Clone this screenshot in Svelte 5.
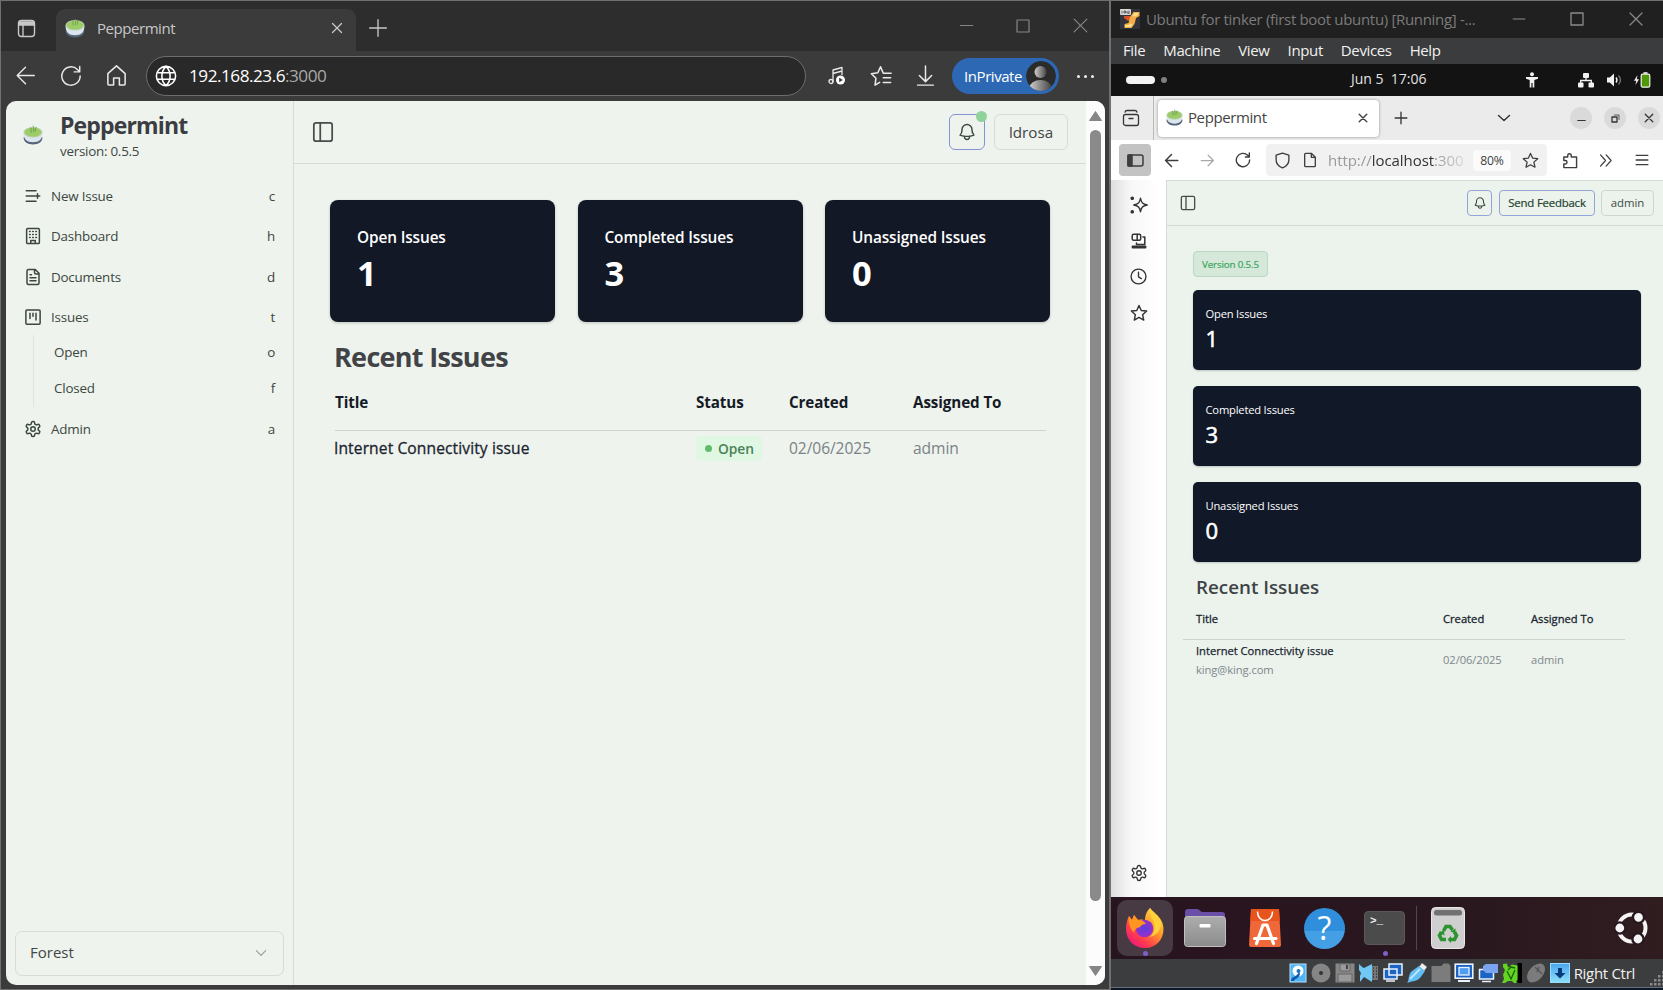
<script>
  const nav = [
    { label: 'New Issue', key: 'c', icon: 'list' },
    { label: 'Dashboard', key: 'h', icon: 'building' },
    { label: 'Documents', key: 'd', icon: 'file' },
    { label: 'Issues', key: 't', icon: 'kanban' },
    { label: 'Open', key: 'o', sub: true },
    { label: 'Closed', key: 'f', sub: true },
    { label: 'Admin', key: 'a', icon: 'gear' }
  ];
  const stats = [
    { label: 'Open Issues', value: 1 },
    { label: 'Completed Issues', value: 3 },
    { label: 'Unassigned Issues', value: 0 }
  ];
  const menus = ['File', 'Machine', 'View', 'Input', 'Devices', 'Help'];
  const paths = {
    list: 'M16 5H3M16 12H3M16 19H3M18 9v6M21 12h-7',
    building: 'M5 2h14a1.5 1.5 0 0 1 1.500 1.500v17a1.500 1.500 0 0 1-1.500 1.500H5a1.500 1.500 0 0 1-1.500-1.500v-17A1.500 1.500 0 0 1 5 2zM9 22v-4h6v4M7.500 6h.8M11.600 6h.8M15.700 6h.8M7.500 10h.8M11.600 10h.8M15.700 10h.8M7.500 14h.8M11.600 14h.8M15.700 14h.8',
    file: 'M15 2H6a2 2 0 0 0-2 2v16a2 2 0 0 0 2 2h12a2 2 0 0 0 2-2V7zM14 2v4a2 2 0 0 0 2 2h4M10 9H8M16 13H8M16 17H8',
    kanban: 'M4 2.500h16A1.500 1.500 0 0 1 21.500 4v16a1.500 1.500 0 0 1-1.500 1.500H4A1.500 1.500 0 0 1 2.500 20V4A1.500 1.500 0 0 1 4 2.500zM8 7v7M12 7v4M16 7v9',
    gear: 'M12.220 2h-.44a2 2 0 0 0-2 2v.18a2 2 0 0 1-1 1.730l-.43.25a2 2 0 0 1-2 0l-.15-.08a2 2 0 0 0-2.730.73l-.22.38a2 2 0 0 0 .73 2.730l.15.1a2 2 0 0 1 1 1.720v.51a2 2 0 0 1-1 1.740l-.15.09a2 2 0 0 0-.73 2.730l.22.38a2 2 0 0 0 2.730.73l.15-.08a2 2 0 0 1 2 0l.43.25a2 2 0 0 1 1 1.730V20a2 2 0 0 0 2 2h.44a2 2 0 0 0 2-2v-.18a2 2 0 0 1 1-1.730l.43-.25a2 2 0 0 1 2 0l.15.08a2 2 0 0 0 2.730-.73l.22-.39a2 2 0 0 0-.73-2.730l-.15-.08a2 2 0 0 1-1-1.740v-.5a2 2 0 0 1 1-1.740l.15-.09a2 2 0 0 0 .73-2.730l-.22-.38a2 2 0 0 0-2.730-.73l-.15.08a2 2 0 0 1-2 0l-.43-.25a2 2 0 0 1-1-1.730V4a2 2 0 0 0-2-2zM15 12a3 3 0 1 1-6 0 3 3 0 0 1 6 0z',
    panel: 'M4.500 2h15A2.500 2.500 0 0 1 22 4.500v15a2.500 2.500 0 0 1-2.500 2.500h-15A2.500 2.500 0 0 1 2 19.500v-15A2.500 2.500 0 0 1 4.500 2zM9 2v20',
    bell: 'M14.860 17.080a23.800 23.800 0 0 0 5.450-1.310A9 9 0 0 1 18 9.750V9A6 6 0 0 0 6 9v.75a9 9 0 0 1-2.310 6.020c1.730.64 3.560 1.090 5.450 1.310m5.720 0a24.300 24.300 0 0 1-5.720 0m5.720 0a3 3 0 1 1-5.720 0',
    close: 'M3 3l18 18M21 3L3 21',
    plus: 'M12 2v20M2 12h20',
    minus: 'M2 12h20',
    square: 'M3 3h18v18H3z',
    back: 'M22 12H2.500M12 2.500L2.500 12l9.500 9.500',
    forward: 'M2 12h19.500M13 3.500l8.500 8.500-8.500 8.500',
    reload: 'M22 12a10 10 0 1 1-3-7.100L21.500 7.300M21.500 1.500v6h-6',
    home: 'M3 10l9-8 9 8v10.500a1.500 1.500 0 0 1-1.500 1.500H15v-7.500h-6V22H4.500A1.500 1.500 0 0 1 3 20.500z',
    globe: 'M22.500 12a10.500 10.500 0 1 1-21 0 10.500 10.500 0 0 1 21 0zM12 1.500c-6 5.500-6 15.500 0 21M12 1.500c6 5.500 6 15.500 0 21M2.600 8.500h18.800M2.600 15.500h18.800',
    starlist: 'M22 9h-7.500L11.500 2 8.500 8.500 1.500 9.500 6.500 14.500 5.500 22l5-3M14.500 14h8M14.500 19h8M17 9h6',
    download: 'M12 1v17M5 12l7 7 7-7M3 23h18',
    star: 'M12 2l3 6.600 7.200.8-5.400 4.900 1.500 7.200L12 17.900l-6.300 3.600 1.500-7.200L1.800 9.400 9 8.600z',
    chevron: 'M4 8l8 8 8-8',
    clock: 'M22.500 12a10.500 10.500 0 1 1-21 0 10.500 10.500 0 0 1 21 0zM12 6v6.500l4 2.500',
    shield: 'M12 1.500l9 3v6.500c0 5.500-4 9.500-9 11.500-5-2-9-6-9-11.500V4.500z',
    page: 'M14 2H5.500A1.500 1.500 0 0 0 4 3.500v17A1.500 1.500 0 0 0 5.500 22h13a1.500 1.500 0 0 0 1.500-1.500V8zM14 2v6h6',
    puzzle: 'M4 7h5.500V5a2.500 2.500 0 0 1 5 0v2H22v15H4v-5h2a2.500 2.500 0 0 0 0-5H4z',
    double: 'M4 3l8 9-8 9M13 3l8 9-8 9',
    menu: 'M2 4h20M2 12h20M2 20h20',
    sparkle: 'M14 3c1 6 3 8 9 9-6 1-8 3-9 9-1-6-3-8-9-9 6-1 8-3 9-9z'
  };
</script>

{#snippet ico(name, size, sw = 2)}
  <svg class="ico" width={size} height={size} viewBox="0 0 24 24" stroke-width={sw}><path d={paths[name]} /></svg>
{/snippet}

{#snippet tea(size)}
  <svg class="pic" width={size} height={size} viewBox="0 0 36 36">
    <path d="M1 22c0 9 8 13 17 13s17-4 17-13z" fill="#56647a" />
    <path d="M1 14c0 12 6 17 17 17s17-5 17-17z" fill="#dbe5ee" />
    <ellipse cx="18" cy="13" rx="17" ry="9.500" fill="#b9d3ac" />
    <ellipse cx="18" cy="12.800" rx="15" ry="8" fill="#9ccb68" />
    <path d="M14 5c2 3-1 4 1 8M18.500 2c2 4-1 6 1 10M23.500 4c-2 3 0 4-1 7" fill="none" stroke="#639747" stroke-width="1.500" stroke-linecap="round" />
  </svg>
{/snippet}

<div class="screen">
  <section class="edge">
    <div class="edge-tabs">
      <div class="tabs-menu">
        <svg class="ico" width="20" height="20" viewBox="0 0 20 20" stroke-width="1.400"><rect x="1.500" y="1.500" width="16" height="16" rx="3" /><path d="M2 3h15v3H2z" fill="currentColor" /><path d="M6 6v11" /></svg>
      </div>
      <div class="edge-tab">
        {@render tea(20)}
        <span class="tab-title">Peppermint</span>
        {@render ico('close', 12, 2.6)}
      </div>
      <div class="new-tab">{@render ico('plus', 20, 1.6)}</div>
      <div class="win-buttons">
        {@render ico('minus', 15, 1.6)}
        {@render ico('square', 16, 1.8)}
        {@render ico('close', 17, 1.7)}
      </div>
    </div>

    <div class="edge-bar">
      <div>{@render ico('back', 21, 1.6)}</div>
      <div>{@render ico('reload', 22, 1.6)}</div>
      <div>{@render ico('home', 23, 1.6)}</div>
      <div class="address">
        {@render ico('globe', 22, 1.7)}
        <span class="ip">192.168.23.6<span>:3000</span></span>
      </div>
      <div class="music">
        <svg class="ico" width="18" height="20" viewBox="0 0 18 20" stroke-width="1.300"><circle cx="3" cy="15.500" r="2" /><path d="M5 15.500V4l9-2.500v7M5 7.500l9-2.500" /><circle cx="12.500" cy="14" r="4.500" fill="#fff" stroke="none" /><path d="M11.200 11.800v4.400l3.600-2.200z" fill="#333" stroke="none" /></svg>
      </div>
      <div>{@render ico('starlist', 22, 1.7)}</div>
      <div class="down-btn">{@render ico('download', 21, 1.7)}</div>
      <div class="inprivate">
        <span>InPrivate</span>
        <svg class="pic" width="30" height="30" viewBox="0 0 30 30">
          <defs>
            <linearGradient id="av"><stop offset="0" stop-color="#d0ccca" /><stop offset="1" stop-color="#454545" /></linearGradient>
            <clipPath id="avc"><circle cx="15" cy="15" r="15" /></clipPath>
          </defs>
          <g clip-path="url(#avc)"><circle cx="15" cy="15" r="15" fill="#2b2b2b" /><circle cx="14.500" cy="11" r="6" fill="url(#av)" /><ellipse cx="14.500" cy="27" rx="11" ry="8" fill="url(#av)" /></g>
        </svg>
      </div>
      <div class="dots"><i></i><i></i><i></i></div>
    </div>

    <div class="edge-page">
      <aside class="side">
        <div class="brand">
          {@render tea(20)}
          <div class="brand-text">
            <h1>Peppermint</h1>
            <p>version: 0.5.5</p>
          </div>
        </div>
        <nav>
          {#each nav as item}
            <div class="nav-row" class:sub={item.sub}>
              {#if item.icon}{@render ico(item.icon, 18, 2)}{/if}
              <span class="nav-label">{item.label}</span>
              <span class="nav-key">{item.key}</span>
            </div>
          {/each}
        </nav>
        <div class="theme"><span>Forest</span>{@render ico('chevron', 14, 2)}</div>
      </aside>

      <div class="main">
        <header class="top">
          {@render ico('panel', 22, 1.9)}
          <div class="bell">{@render ico('bell', 20, 1.7)}<i class="ping"></i></div>
          <div class="user">ldrosa</div>
        </header>
        <div class="stats">
          {#each stats as s}
            <div class="stat"><span>{s.label}</span><b>{s.value}</b></div>
          {/each}
        </div>
        <h2>Recent Issues</h2>
        <div class="table">
          <div class="tr th"><span>Title</span><span>Status</span><span>Created</span><span>Assigned To</span></div>
          <div class="tr td">
            <span class="strong">Internet Connectivity issue</span>
            <span class="badge"><i></i>Open</span>
            <span>02/06/2025</span>
            <span>admin</span>
          </div>
        </div>
      </div>

      <div class="scroll">
        <svg class="pic" width="13" height="10" viewBox="0 0 13 10"><path d="M6.500 .5L12.500 9.500H.5z" fill="#868686" stroke="#868686" stroke-linejoin="round" /></svg>
        <div class="thumb"></div>
        <svg class="pic down" width="13" height="10" viewBox="0 0 13 10"><path d="M6.500 9.500L12.500 .5H.5z" fill="#868686" stroke="#868686" stroke-linejoin="round" /></svg>
      </div>
    </div>
  </section>

  <section class="vm">
    <div class="vm-title">
      <svg class="pic" width="20" height="20" viewBox="0 0 20 20"><rect width="20" height="20" fill="#32343c" /><path d="M4 7h6l1 3-3 2-4-3z" fill="#d9542b" /><path d="M19.500 3h-6l-3.500 5-1.500 6-4 1v4h7l3-4 1.500-6 3.500-2z" fill="#f7ad45" /><path d="M18.500 4h-4l-2 3 3 .5 2.500-1.500zM11 14l-3 2H5v2h5.500l2-2z" fill="#ffdf8c" /><rect x="0" y="0" width="11" height="6" rx="1" fill="#d8d8d8" /><path d="M2 2v2.500M4 2h1.500v2H4zM7 2v2h2M9 1.500V5" stroke="#444" stroke-width=".8" fill="none" /></svg>
      <span class="vm-name">Ubuntu for tinker (first boot ubuntu) [Running] -...</span>
      <div class="vm-win">
        {@render ico('minus', 14, 1.8)}
        {@render ico('square', 16, 2)}
        {@render ico('close', 16, 1.8)}
      </div>
    </div>
    <div class="vm-menu">{#each menus as m}<span>{m}</span>{/each}</div>

    <div class="gnome">
      <i class="ws"></i><i class="ws-dot"></i>
      <span class="clock">Jun 5&nbsp; 17:06</span>
      <svg class="pic access" width="12" height="16" viewBox="0 0 12 16" fill="#f2f2f2"><circle cx="6" cy="2.300" r="2" /><path d="M0 5h12v1.700L8.300 8v7.500H6.600V11H5.400v4.500H3.700V8L0 6.700z" /></svg>
      <svg class="pic net" width="16" height="15" viewBox="0 0 16 15" fill="#f2f2f2"><rect x="5" y="0" width="6" height="5" rx="1" /><rect x="0" y="9.500" width="5.500" height="5" rx="1" /><rect x="10.500" y="9.500" width="5.500" height="5" rx="1" /><path d="M2.700 10V7.500h10.600V10M8 5v2.500" fill="none" stroke="#f2f2f2" stroke-width="1.300" /></svg>
      <svg class="pic vol" width="15" height="14" viewBox="0 0 15 14" fill="#f2f2f2"><path d="M0 4.500h2.800L7 .5v13L2.800 9.500H0z" /><path d="M9 4.500q2 2.500 0 5" fill="none" stroke="#f2f2f2" stroke-width="1.400" /><path d="M11.500 2.500q4 4.500 0 9" fill="none" stroke="#777" stroke-width="1.300" /></svg>
      <svg class="pic" width="17" height="16" viewBox="0 0 17 16"><path d="M3.500 3L0 8.800h2.200L1.500 13 5 7.200H2.800z" fill="#f2f2f2" /><rect x="7.200" y="2.200" width="8.600" height="13" rx="1.500" fill="#4e9a06" stroke="#f2f2f2" stroke-width="1.200" /><path d="M9.500 1h4" stroke="#f2f2f2" stroke-width="1.600" /></svg>
    </div>

    <div class="ff-tabs">
      <div class="ff-view">
        <svg class="ico" width="18" height="18" viewBox="0 0 18 18" stroke-width="1.300"><rect x="1.500" y="5.500" width="15" height="11" rx="2" /><path d="M3 3.200q.3-1.700 2-1.700h8q1.700 0 2 1.700M7 9.500h4" /></svg>
      </div>
      <div class="ff-tab">{@render tea(17)}<span>Peppermint</span>{@render ico('close', 10, 3.4)}</div>
      <div class="ff-plus">{@render ico('plus', 14, 2.3)}</div>
      <div class="ff-all"><svg class="ico" width="14" height="8" viewBox="0 0 14 8" stroke-width="1.500"><path d="M1.500 1.500L7 6.500l5.500-5" /></svg></div>
      <div class="ff-win">
        <i class="low">{@render ico('minus', 9, 3)}</i>
        <i><svg class="ico" width="9" height="9" viewBox="0 0 9 9" stroke-width="1.300"><path d="M1 3h5v5H1z" /><path d="M3.500 1H8v4.500" stroke-width=".8" /></svg></i>
        <i>{@render ico('close', 10, 3.200)}</i>
      </div>
    </div>

    <div class="ff-bar">
      <div class="ff-toggle">
        <svg class="ico" width="17" height="13" viewBox="0 0 17 13" stroke-width="1.500"><rect x="1" y="1" width="15" height="11" rx="2" /><path d="M1 1h4v11H1z" fill="currentColor" /></svg>
      </div>
      <div>{@render ico('back', 15, 2.4)}</div>
      <div class="dim">{@render ico('forward', 15, 2)}</div>
      <div>{@render ico('reload', 16, 2.1)}</div>
      <div class="ff-url">
        {@render ico('shield', 17, 1.9)}
        {@render ico('page', 16, 2)}
        <span class="url-text">http://<b>localhost</b>:300</span>
        <span class="zoom">80%</span>
        {@render ico('star', 17, 1.8)}
      </div>
      <div>{@render ico('puzzle', 17, 2)}</div>
      <div>{@render ico('double', 15, 2)}</div>
      <div>{@render ico('menu', 14, 2.4)}</div>
    </div>

    <div class="ff-body">
      <div class="ff-side">
        <svg class="ico" width="18" height="18" viewBox="0 0 24 24" stroke-width="1.900"><path d={paths.sparkle} /><circle cx="3" cy="3" r="1.500" fill="currentColor" /><circle cx="3" cy="21" r="1.500" fill="currentColor" /></svg>
        <svg class="ico" width="16" height="16" viewBox="0 0 16 16" stroke-width="1.500"><rect x="1.200" y="1.200" width="8.500" height="6" rx="1.500" /><path d="M6.200 1.500v5.500M12 4h1.800v7.500H5.500V10M1.500 14h13" /><path d="M1.500 13.200h13v1.500h-13z" fill="currentColor" /></svg>
        {@render ico('clock', 17, 1.9)}
        {@render ico('star', 18, 1.900)}
        <div class="ff-gear">{@render ico('gear', 18, 1.8)}</div>
      </div>
      <div class="guest">
        <header class="g-top">
          {@render ico('panel', 16, 1.9)}
          <div class="g-bell">{@render ico('bell', 14, 1.9)}</div>
          <div class="g-btn">Send Feedback</div>
          <div class="g-user">admin</div>
        </header>
        <div class="g-version">Version 0.5.5</div>
        <div class="g-stats">
          {#each stats as s}
            <div class="g-stat"><span>{s.label}</span><b>{s.value}</b></div>
          {/each}
        </div>
        <h3>Recent Issues</h3>
        <div class="g-table">
          <div class="g-tr g-th"><span>Title</span><span>Created</span><span>Assigned To</span></div>
          <div class="g-tr g-td">
            <div class="g-issue"><span>Internet Connectivity issue</span><em>king@king.com</em></div>
            <span class="g-cell">02/06/2025</span>
            <span class="g-cell">admin</span>
          </div>
        </div>
      </div>
    </div>

    <div class="dock">
      <div class="tile active">
        <svg class="pic" width="40" height="42" viewBox="0 0 40 42">
          <defs>
            <linearGradient id="fx" x1="1" y1="0" x2=".2" y2="1"><stop offset="0" stop-color="#fff04e" /><stop offset=".45" stop-color="#ff9a2a" /><stop offset=".75" stop-color="#ff3d4d" /><stop offset="1" stop-color="#e8157f" /></linearGradient>
            <radialGradient id="fp"><stop offset="0" stop-color="#5a3ee0" /><stop offset="1" stop-color="#9a2fc8" /></radialGradient>
          </defs>
          <path d="M25 1c3 4 9 7 12 14 5 12-3 26-17 26C9 41 1 33 1 22c0-5 1-9 3-13l3 4 2-5 4 5c4-1 6 0 7 1 0-5 1-9 5-13z" fill="url(#fx)" />
          <circle cx="19.500" cy="21.500" r="8.800" fill="url(#fp)" />
          <path d="M4 9l3 4 2-5 4 5c3-.5 6 1 8 4 -3 0-5 1-6 3 -3 1-6 2-6 6-4-4-6-11-5-17z" fill="#ff9420" />
          <path d="M25 1c-1 5 1 8 3 12 3 6 2 14-4 17 8-1 13-8 12-16C33 8 28 6 25 1z" fill="#ffd23a" />
        </svg>
      </div>
      <svg class="pic files" width="42" height="40" viewBox="0 0 42 40"><defs><linearGradient id="fg" x2="0" y2="1"><stop offset="0" stop-color="#adadad" /><stop offset="1" stop-color="#8b8b8b" /></linearGradient></defs><path d="M1 12V4q0-3 3-3h9q2 0 3 1.500 1 1.500 3 1.500h19q3 0 3 3v5z" fill="#6a4fa8" /><rect x=".5" y="8.500" width="41" height="30" rx="3" fill="url(#fg)" stroke="#c0c0c0" /><rect x="15.500" y="16" width="11" height="3.500" rx="1" fill="#fff" /></svg>
      <svg class="pic store" width="34" height="40" viewBox="0 0 34 40"><path d="M3 1h28l2 36q0 2-2 2H3q-2 0-2-2z" fill="#f0683a" /><path d="M3 1h28l.8 12H2.200z" fill="#e9531c" /><path d="M9.500 3.500c0 12 15 12 15 0" fill="none" stroke="#fff" stroke-width="1.600" /><path d="M8.500 35.500L15 17h4l6.500 18.500M6.500 30.500h21.500" fill="none" stroke="#fff" stroke-width="3.200" stroke-linecap="round" stroke-linejoin="round" /></svg>
      <div class="help"><span>?</span></div>
      <div class="term"><span>&gt;_</span></div>
      <i class="dock-line"></i>
      <svg class="pic trash" width="34" height="42" viewBox="0 0 34 42"><rect x=".5" y=".5" width="33" height="41" rx="4" fill="#cfcfcf" stroke="#e8e8e8" /><rect x="3" y="3" width="28" height="5.500" rx="2.500" fill="#717171" /><g fill="none" stroke="#2c9330" stroke-width="3.600"><path d="M12.500 24l2.500-4.500h4L21.500 23M23.500 25l2 3.500-2 4h-4.500M15 32.500h-4.500l-2-4 2-3.500" /></g><path d="M19.500 24.500l5-3v5zM20 36v-7l-3.500 3.500zM8 25.500l5-2 .5 5z" fill="#2c9330" /></svg>
      <svg class="pic ubuntu" width="34" height="34" viewBox="0 0 34 34"><circle cx="18" cy="17" r="13.500" fill="none" stroke="#f4f4f4" stroke-width="4" /><g fill="#f4f4f4" stroke="#29171f" stroke-width="2.400"><circle cx="5.800" cy="17" r="5.600" /><circle cx="24.500" cy="6.300" r="5.600" /><circle cx="24" cy="28" r="5.600" /></g></svg>
      <i class="run run-a"></i><i class="run run-b"></i>
    </div>

    <div class="status">
      <svg class="pic" width="20" height="20" viewBox="0 0 20 20"><rect x="2" y="1" width="16" height="18" fill="#4fb4f2" stroke="#b6e2ff" /><circle cx="10" cy="8" r="5.500" fill="#fff" /><circle cx="10.500" cy="8" r="2" fill="#1b72c4" /><path d="M3 18c0-5 5-3 8-9l1 2c-1 5-5 4-6 7z" fill="#1059ae" /></svg>
      <svg class="pic" width="20" height="20" viewBox="0 0 20 20"><circle cx="10" cy="10" r="9.500" fill="#858585" /><circle cx="10" cy="10" r="2" fill="#333" /></svg>
      <svg class="pic" width="20" height="20" viewBox="0 0 20 20"><rect x=".5" y=".5" width="19" height="19" fill="#868686" /><path d="M5 1h10v7H5zM3 11h14v8H3z" fill="#9a9a9a" stroke="#666" /><path d="M11 2h2v4h-2z" fill="#444" /></svg>
      <svg class="pic" width="20" height="20" viewBox="0 0 20 20"><path d="M10 3h9v14h-9z" fill="#777" /><path d="M14.500 4v12M17.500 4v12" stroke="#444" stroke-dasharray="2 1" /><path d="M0 1q4 4 5 4l8-4v18l-8-5-4 5V13l1-3-2-3z" fill="#70c8f5" /></svg>
      <svg class="pic" width="20" height="20" viewBox="0 0 20 20"><path d="M6 1h13v11H6zM1 6h13v10H1z" fill="#1c64c4" stroke="#e8f2ff" stroke-width="1.500" /><path d="M3 18h9" stroke="#e8f2ff" stroke-width="1.500" /></svg>
      <svg class="pic" width="20" height="20" viewBox="0 0 20 20"><path d="M12 4l3-4 5 4-3 4z" fill="#eee" stroke="#888" stroke-width=".5" /><path d="M0 20c2-1 1-9 5-12l7-5 6 5-5 7c-4 4-9 3-13 5z" fill="#62bdf2" /><path d="M3 16l10-10" stroke="#b9e6ff" stroke-width="2" /></svg>
      <svg class="pic" width="20" height="20" viewBox="0 0 20 20"><path d="M.5 3h10l2-2.500h5L19.500 3v16H.5z" fill="#7c7c7c" /></svg>
      <svg class="pic" width="20" height="20" viewBox="0 0 20 20"><rect x="1.200" y="1.200" width="17.600" height="14" fill="#1c64c4" stroke="#e8f2ff" stroke-width="1.600" /><rect x="5" y="4.500" width="10" height="7.500" fill="#4f9df0" stroke="#e8f2ff" stroke-width="1.300" /><path d="M4 18h12" stroke="#e8f2ff" stroke-width="2" /></svg>
      <svg class="pic" width="20" height="20" viewBox="0 0 20 20"><path d="M1.500 6.500h14v9.500h-14z" fill="#1c64c4" stroke="#e8f2ff" stroke-width="1.500" /><path d="M8 1h12v9H8L5 7V3z" fill="#7ba4f0" /><path d="M4 18.500h9" stroke="#e8f2ff" stroke-width="1.500" /></svg>
      <svg class="pic" width="20" height="20" viewBox="0 0 20 20"><path d="M15.500 0H20v20h-4.500z" /><path d="M1 1l4-.5 1 4 4-3 5.500 1v14l-1.500 2 1 1.500h-3l-2-2H6l-3 2H0l2-4-1-4 2-5-2-3z" fill="#63d422" /><path d="M5 8l4 8 4-9M6 7l3-3 4 1M7 3l2 2" stroke="#16610b" stroke-width="1.300" fill="none" /></svg>
      <svg class="pic" width="20" height="20" viewBox="0 0 20 20"><ellipse cx="10" cy="10" rx="7" ry="11" transform="rotate(42 10 10)" fill="#7b7b7b" /><path d="M9 4l7 7M13 4l-2 5" stroke="#555" stroke-width="1.500" /></svg>
      <svg class="pic" width="20" height="20" viewBox="0 0 20 20"><defs><linearGradient id="ar" x2="0" y2="1"><stop offset="0" stop-color="#4aa6ee" /><stop offset="1" stop-color="#8de0fb" /></linearGradient></defs><rect x=".5" y=".5" width="19" height="19" fill="url(#ar)" stroke="#9adcff" /><path d="M8 5h4v5h3.500L10 15.500 4.500 10H8z" fill="#063a78" /></svg>
      <span class="host">Right Ctrl</span>
      <svg class="pic grip" width="13" height="15" viewBox="0 0 13 15" fill="#8a8a8a"><path d="M0 12h2.500v2.500H0zM4 12h2.500v2.500H4zM8 12h2.500v2.500H8zM12 12h1v2.500h-1zM4 8h2.500v2.500H4zM8 8h2.500v2.500H8zM12 8h1v2.500h-1zM8 4h2.500v2.500H8zM12 4h1v2.500h-1zM12 0h1v2.500h-1z" /></svg>
    </div>
  </section>
</div>

<style>
  :global(body) { margin: 0; background: #0b1626; }
  .screen { display: flex; width: 1663px; height: 990px; overflow: hidden; font-family: "Open Sans", "Noto Sans", sans-serif; white-space: nowrap; }
  .screen *, .screen { box-sizing: border-box; }
  h1, h2, h3, p { margin: 0; }
  i { display: block; flex: none; }
  em { font-style: normal; }
  .ico { display: block; flex: none; fill: none; stroke: currentColor; stroke-linecap: round; stroke-linejoin: round; }
  .pic { display: block; flex: none; }

  .edge { width: 1111px; height: 990px; flex: none; background: #3b3b3b; border: 1px solid #707070; border-right-width: 2px; display: flex; flex-direction: column; }
  .edge-tabs { height: 50px; background: #2d2d2d; display: flex; align-items: flex-end; color: #c8c8c8; }
  .tabs-menu { width: 55px; height: 50px; padding: 18px 0 0 16px; }
  .edge-tab { width: 300px; height: 42px; background: #3b3b3b; border-radius: 9px 9px 0 0; display: flex; align-items: center; padding: 0 13px 4px 9px; }
  .tab-title { font-size: 15px; letter-spacing: -0.45px; margin-left: 12px; flex: 1; }
  .new-tab { width: 43px; height: 50px; display: flex; align-items: center; justify-content: center; padding: 4px 0 0 1px; }
  .win-buttons { flex: 1; height: 50px; display: flex; justify-content: flex-end; align-items: center; gap: 41px; padding: 0 20px 1px 0; color: #858585; }
  .edge-bar { height: 50px; flex: none; display: grid; grid-template-columns: 49px 41px 50px 670px 52px 36px 51px 115px 40px; align-items: center; color: #e9e9e9; padding-bottom: 1px; }
  .edge-bar > div { display: flex; justify-content: center; }
  .edge-bar > .address { width: 660px; height: 40px; margin-left: 5px; border: 1px solid #6d6d6d; border-radius: 20px; background: #292929; justify-content: flex-start; align-items: center; padding-left: 8px; color: #fff; }
  .ip { font-size: 17.200px; margin-left: 12px; letter-spacing: -0.5px; }
  .ip span { color: #a8a8a8; }
  .edge-bar > .down-btn { padding-left: 1px; }
  .edge-bar > .inprivate { width: 107px; height: 36px; margin-left: 2px; border-radius: 18px; background: #2c68b4; color: #fff; align-items: center; justify-content: flex-end; padding-right: 3px; gap: 4px; font-size: 15px; letter-spacing: -0.45px; }
  .edge-bar > .dots { gap: 4px; padding-top: 1px; }
  .dots i { width: 3px; height: 3px; border-radius: 50%; background: #eee; }

  .edge-page { width: 1099px; height: 884px; margin-left: 5px; background: #eef3ed; border-radius: 10px; overflow: hidden; display: flex; color: #414647; }
  .side { width: 288px; border-right: 1px solid #d5dcd5; display: flex; flex-direction: column; }
  .brand { display: flex; padding: 9px 0 0 17px; height: 75px; }
  .brand > .pic { margin-top: 15px; }
  .brand-text { margin-left: 17px; }
  h1 { font-size: 23px; line-height: 30px; font-weight: 700; letter-spacing: -0.85px; color: #3b3d42; }
  .brand p { font-size: 13.4px; line-height: 22px; letter-spacing: -0.25px; }
  nav { flex: 1; display: flex; flex-direction: column; color: #3b473f; }
  .nav-row { height: 40.3px; display: flex; align-items: center; padding: 0 18px 0 18px; font-size: 13.4px; letter-spacing: -0.2px; }
  .nav-label { flex: 1; margin-left: 9px; }
  .nav-row.sub { height: 36px; margin-left: 27px; padding-left: 20px; padding-bottom: 2px; border-left: 1px solid #dfe4e2; position: relative; top: -2px; }
  .nav-row.sub .nav-label { margin-left: 0; }
  .theme { width: 269px; height: 45px; margin: 0 0 9px 9px; border: 1px solid #d5ddd5; border-radius: 7px; display: flex; align-items: center; justify-content: space-between; padding: 0 15px 2px 14px; font-size: 15px; }
  .theme span { padding-bottom: 1px; }
  .theme .ico { color: #98a09a; }
  .main { width: 792px; }
  .top { height: 63px; border-bottom: 1px solid #d5dcd5; display: flex; align-items: center; padding: 0 18px 0 18px; }
  .top > .ico { margin-right: auto; color: #474c4c; }
  .bell { position: relative; width: 36px; height: 36px; border: 1px solid #8494d3; border-radius: 6px; display: flex; align-items: center; justify-content: center; color: #3d4844; }
  .ping { position: absolute; width: 11px; height: 11px; border-radius: 50%; background: #8fd39b; right: -3px; top: -4px; }
  .user { width: 74px; height: 36px; margin-left: 9px; border: 1px solid #d5ddd5; border-radius: 6px; display: flex; align-items: center; justify-content: center; font-size: 15.200px; padding-bottom: 1px; }
  .stats { display: flex; gap: 22.500px; padding: 36px 0 0 36px; }
  .stat { width: 225px; height: 122px; border-radius: 8px; background: #121826; color: #fff; padding: 26px 27px; box-shadow: 0 1px 3px #0003; }
  .stat span { display: block; font-size: 15.400px; line-height: 24px; font-weight: 600; letter-spacing: -0.13px; }
  .stat b { display: block; font-size: 34.500px; line-height: 46px; font-weight: 700; }
  h2 { margin: 14px 0 0 40px; font-size: 27px; line-height: 42px; font-weight: 700; letter-spacing: -0.7px; color: #414347; }
  .table { width: 711px; margin-left: 41px; }
  .tr { display: grid; grid-template-columns: 361px 93px 124px 1fr; align-items: center; font-size: 15.600px; letter-spacing: -0.08px; }
  .th { height: 53px; border-bottom: 1px solid #cdd3d3; font-weight: 700; font-size: 15.200px; letter-spacing: -0.1px; color: #151b26; padding-bottom: 5px; }
  .td { height: 36px; color: #7b8285; padding-bottom: 3px; }
  .strong { color: #1c2430; -webkit-text-stroke: 0.3px #1c2430; letter-spacing: 0.1px; margin-left: -1px; }
  .badge { width: 66px; height: 25px; position: relative; top: 1px; border-radius: 4px; background: #e0f7e4; color: #4a8257; display: flex; align-items: center; font-weight: 600; font-size: 13.800px; padding-left: 9px; }
  .badge i { width: 7px; height: 7px; border-radius: 50%; background: #62bc6b; margin-right: 6px; }
  .scroll { width: 19px; background: #fcfcfc; display: flex; flex-direction: column; align-items: center; padding-top: 10px; }
  .thumb { width: 11px; height: 771px; border-radius: 6px; background: #8a8a8a; margin-top: 9px; }
  .down { margin-top: 65px; }

  .vm { flex: 1; display: flex; flex-direction: column; }
  .vm-title { height: 38px; flex: none; border-top: 1px solid #707070; background: #202020; display: flex; align-items: center; padding: 0 0 1px 9px; color: #7b7b7b; font-size: 15px; }
  .vm-name { flex: 1; margin-left: 6px; letter-spacing: -0.32px; padding-bottom: 1px; }
  .vm-win { display: flex; gap: 43px; padding-right: 19px; color: #8b8b8b; align-items: center; }
  .vm-menu { height: 26px; flex: none; background: #3a3c3d; display: flex; align-items: center; gap: 18px; padding: 0 0 2px 12px; color: #f1f1f1; font-size: 15px; letter-spacing: -0.37px; }
  .gnome { height: 32px; flex: none; background: #131313; display: flex; align-items: center; color: #e3e3e3; padding-left: 15px; }
  .ws { width: 29px; height: 8px; border-radius: 4px; background: #f3f3f3; }
  .ws-dot { width: 6px; height: 6px; border-radius: 50%; background: #808080; margin-left: 6px; }
  .clock { font-size: 14px; letter-spacing: 0; margin-left: 184px; width: 175px; padding-bottom: 3px; }
  .net { margin-left: 40px; }
  .vol { margin-left: 13px; }
  .vol + .pic { margin-left: 12px; }

  .ff-tabs { height: 44px; flex: none; background: #ebebeb; display: flex; align-items: center; color: #353535; }
  .ff-view { width: 43px; height: 44px; display: flex; align-items: center; justify-content: center; border-right: 1px solid #b9b9b9; padding-right: 3px; }
  .ff-tab { width: 221px; height: 37px; margin-left: 4px; background: #fff; border-radius: 4px; box-shadow: 0 0 3px #0006; display: flex; align-items: center; padding: 0 11px 1px 8px; color: #444; }
  .ff-tab span { flex: 1; margin-left: 5px; font-size: 15px; letter-spacing: -0.4px; padding-bottom: 1px; }
  .ff-plus { margin-left: 15px; }
  .ff-all { margin-left: 89px; }
  .ff-win { display: flex; gap: 12px; margin-left: 59px; }
  .ff-win i { width: 22px; height: 22px; border-radius: 50%; background: #dadada; display: flex; align-items: center; justify-content: center; }
  .ff-win .low { padding-top: 4px; }
  .ff-bar { height: 40px; flex: none; background: #fff; display: grid; grid-template-columns: 42px 36px 36px 36px 289px 38px 35px 38px; align-items: center; color: #3e3e3e; }
  .ff-bar > div { display: flex; justify-content: center; }
  .ff-bar > .ff-toggle { width: 32px; height: 32px; background: #c3c3c3; border-radius: 4px; align-items: center; margin-left: 8px; }
  .ff-bar > .dim { color: #aaa; }
  .ff-bar > .ff-url { width: 281px; height: 32px; margin-left: 5px; background: #f1f1f1; border-radius: 4px; justify-content: flex-start; align-items: center; padding-left: 8px; }
  .ff-url > .ico + .ico { margin-left: 11px; }
  .url-text { width: 138px; margin-left: 10px; font-size: 15px; letter-spacing: -0.05px; padding-bottom: 1px; color: #9a9a9a; -webkit-mask-image: linear-gradient(90deg, #000 78%, #0003 100%); mask-image: linear-gradient(90deg, #000 78%, #0003 100%); }
  .url-text b { font-weight: 400; color: #333; }
  .zoom { width: 38px; height: 21px; margin: 0 11px 0 7px; border-radius: 4px; background: #fbfbfb; display: flex; align-items: center; justify-content: center; font-size: 12.200px; letter-spacing: -0.2px; }

  .ff-body { height: 717px; flex: none; display: flex; }
  .ff-side { width: 55px; background: linear-gradient(90deg, #dedede, #f7f7f7 35%, #fff 85%); display: flex; flex-direction: column; align-items: center; padding: 16px 0 15px 0; gap: 19px; color: #333; }
  .ff-gear { margin-top: auto; }
  .guest { flex: 1; background: #ebf3ec; border-left: 1px solid #d3dad5; border-top: 1px solid #d3dad5; color: #3f4a44; }
  .g-top { height: 45px; border-bottom: 1px solid #d0dad2; display: flex; align-items: center; padding: 0 9px 1px 13px; font-size: 11.4px; }
  .g-top > .ico { margin-right: auto; }
  .g-bell, .g-btn, .g-user { height: 26px; border: 1px solid #93a4d6; border-radius: 4px; display: flex; align-items: center; justify-content: center; }
  .g-bell { width: 25px; }
  .g-btn { width: 96px; margin: 0 6px 0 7px; color: #24422f; -webkit-text-stroke: 0.2px #24422f; letter-spacing: -0.2px; }
  .g-user { width: 53px; border-color: #ccd8cf; }
  .g-version { width: 75px; height: 26px; margin: 25px 0 0 26px; border: 1px solid #b9d9c3; border-radius: 4px; background: #d6e8da; color: #38a65c; font-size: 9.8px; -webkit-text-stroke: 0.2px #38a65c; display: flex; align-items: center; justify-content: center; letter-spacing: -0.16px; }
  .g-stats { display: flex; flex-direction: column; gap: 16px; margin: 13px 0 0 26px; }
  .g-stat { width: 448px; height: 80px; border-radius: 5px; background: #111827; color: #fff; padding: 14px 12.500px; box-shadow: 0 1px 2px #0003; }
  .g-stat span { display: block; font-size: 11.2px; line-height: 20px; letter-spacing: -0.2px; }
  .g-stat b { display: block; font-size: 22px; line-height: 29px; font-weight: 400; -webkit-text-stroke: 0.6px #fff; }
  h3 { margin: 11px 0 0 29px; font-size: 18.8px; line-height: 28px; font-weight: 600; letter-spacing: 0; color: #3e4347; }
  .g-table { width: 442px; margin-left: 16px; }
  .g-tr { display: grid; grid-template-columns: 247px 88px 1fr; align-items: center; padding-left: 13px; font-size: 11.200px; letter-spacing: -0.08px; }
  .g-th { height: 39px; border-bottom: 1px solid #ccd3d0; color: #1b2430; -webkit-text-stroke: 0.3px #1b2430; padding-bottom: 4px; letter-spacing: 0; }
  .g-td { height: 40px; color: #7f878c; }
  .g-cell { padding-bottom: 2px; }
  .g-issue { display: flex; flex-direction: column; line-height: 19px; }
  .g-issue span { color: #1b2430; -webkit-text-stroke: 0.25px #1b2430; letter-spacing: -0.03px; }

  .dock { position: relative; height: 62px; flex: none; background: linear-gradient(90deg, #28141f, #29171f 60%, #301d20); display: flex; align-items: center; padding-left: 6px; }
  .tile { width: 56px; height: 56px; border-radius: 10px; background: #483a42; display: flex; align-items: center; justify-content: center; }
  .files { margin-left: 11px; }
  .store { margin-left: 22px; }
  .help { width: 41px; height: 41px; margin-left: 22px; border-radius: 50%; background: linear-gradient(#2f8fdd 55%, #459fe4 55%); display: flex; align-items: center; justify-content: center; color: #fff; font-size: 32px; line-height: 40px; }
  .term { width: 41px; height: 34px; margin-left: 19px; border-radius: 4px; background: #4b4b4b; border: 1px solid #595959; color: #eee; font: 700 11px/14px "Liberation Mono", monospace; padding: 2px 5px; }
  .dock-line { width: 1px; height: 44px; margin-left: 11px; background: #55454d; }
  .trash { margin-left: 14px; }
  .ubuntu { margin-left: auto; margin-right: 15px; }
  .run { position: absolute; width: 5px; height: 5px; border-radius: 50%; background: #7e5fc9; bottom: 3px; }
  .run-a { left: 32px; }
  .run-b { left: 272px; }
  .status { height: 29px; flex: none; background: #3c3d3e; border-bottom: 1px solid #68707a; display: flex; align-items: center; gap: 3.85px; padding: 0 0 1px 176.500px; color: #f1f1f1; }
  .host { font-size: 15px; letter-spacing: -0.3px; }
  .grip { margin-left: auto; align-self: flex-end; }
</style>
